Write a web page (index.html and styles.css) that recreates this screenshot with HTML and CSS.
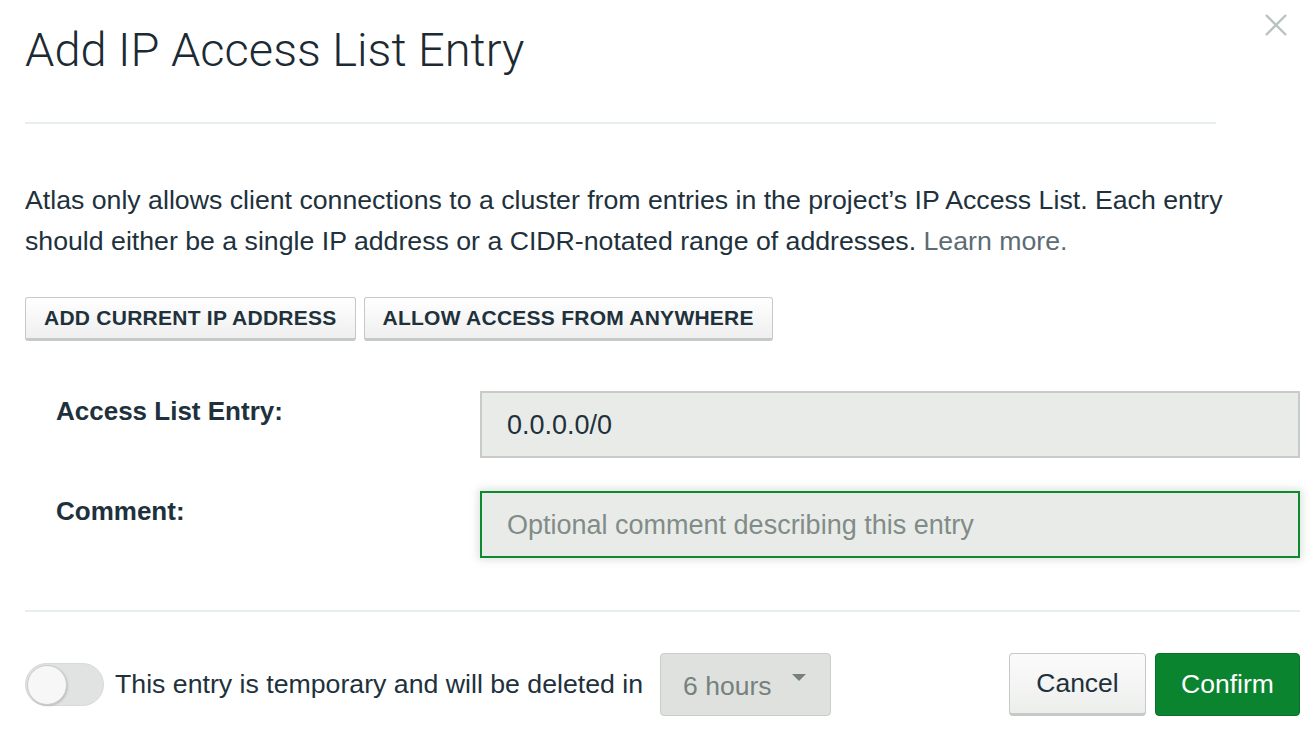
FILE: index.html
```html
<!DOCTYPE html>
<html>
<head>
<meta charset="utf-8">
<link rel="stylesheet" href="styles.css">
</head>
<body>
<div class="modal">
  <header class="modal-header">
    <h1 class="modal-title">Add IP Access List Entry</h1>
    <button class="close" aria-label="Close">
      <svg width="24" height="24" viewBox="0 0 24 24"><path d="M2 2 L22 22 M22 2 L2 22" stroke="#b9c3c1" stroke-width="2.4" fill="none"/></svg>
    </button>
  </header>
  <div class="divider top-divider"></div>
  <p class="intro">Atlas only allows client connections to a cluster from entries in the project’s IP Access List. Each entry<br>should either be a single IP address or a CIDR-notated range of addresses. <a class="link">Learn more.</a></p>
  <div class="quick-actions">
    <button class="btn-secondary">ADD CURRENT IP ADDRESS</button>
    <button class="btn-secondary">ALLOW ACCESS FROM ANYWHERE</button>
  </div>
  <div class="form">
    <label class="form-label">Access List Entry:</label>
    <div class="input">0.0.0.0/0</div>
    <label class="form-label">Comment:</label>
    <div class="input focused placeholder">Optional comment describing this entry</div>
  </div>
  <div class="divider bottom-divider"></div>
  <footer class="footer">
    <div class="temp">
      <span class="toggle"><span class="knob"></span></span>
      <span class="temp-text">This entry is temporary and will be deleted in</span>
      <span class="select">6 hours<span class="caret"></span></span>
    </div>
    <div class="actions">
      <button class="btn-cancel">Cancel</button>
      <button class="btn-confirm">Confirm</button>
    </div>
  </footer>
</div>
</body>
</html>
```
FILE: styles.css
```css
* { box-sizing: border-box; }
html, body { margin: 0; padding: 0; background: #fff; }
body {
  font-family: "Liberation Sans", Arial, sans-serif;
  color: #21313c;
  width: 1315px;
  height: 748px;
  overflow: hidden;
}
.modal { padding: 0 15px 0 25px; }
.modal-header {
  display: flex;
  justify-content: space-between;
  align-items: flex-start;
  height: 122px;
}
.modal-title {
  margin: 0;
  padding-top: 20px;
  font-family: Roboto, "Liberation Sans", sans-serif;
  font-weight: 300;
  font-size: 47px;
  line-height: 60px;
  color: #1c2a33;
}
.close {
  border: 0;
  background: none;
  padding: 0;
  margin-top: 13px;
  margin-right: 12px;
  width: 24px;
  height: 24px;
}
.divider { height: 2px; background: #e7eeec; }
.top-divider { width: 1191px; }
.bottom-divider { width: 1275px; }
.intro {
  margin: 56px 0 0;
  font-size: 26.7px;
  line-height: 41px;
  color: #21313c;
  white-space: nowrap;
}
.link { color: #5d6c74; }
.quick-actions {
  display: flex;
  gap: 8px;
  margin-top: 35px;
}
.btn-secondary {
  height: 44px;
  padding: 0 18px;
  font-family: "Liberation Sans", Arial, sans-serif;
  font-weight: 700;
  font-size: 21px;
  letter-spacing: 0.25px;
  color: #21313c;
  background: linear-gradient(#ffffff, #eeefee);
  border: 1px solid #c5cac8;
  border-bottom: 3px solid #c5cac8;
  border-radius: 3px;
}
.form {
  display: grid;
  grid-template-columns: 455px 820px;
  row-gap: 33px;
  margin-top: 50px;
  margin-bottom: 52px;
}
.form-label {
  padding-left: 31px;
  padding-top: 5px;
  font-weight: 700;
  font-size: 26px;
  line-height: 30px;
  color: #21313c;
}
.input {
  height: 67px;
  display: flex;
  align-items: center;
  padding: 2px 25px 0;
  background: #e9ebe8;
  border: 2px solid #c7cbc9;
  font-size: 27px;
  color: #21313c;
}
.input.focused {
  border-color: #0b8a2f;
  box-shadow: 0 0 8px 2px rgba(180, 190, 180, 0.45);
}
.input.placeholder { color: #818b88; }
.footer {
  display: flex;
  justify-content: space-between;
  align-items: center;
  width: 1275px;
  margin-top: 41px;
}
.temp { display: flex; align-items: center; }
.toggle {
  position: relative;
  width: 79px;
  height: 43px;
  border-radius: 22px;
  background: #e0e3e1;
  border: 1px solid #d6dad8;
}
.knob {
  position: absolute;
  left: 1px;
  top: 1px;
  width: 40px;
  height: 40px;
  border-radius: 50%;
  background: #f6f7f6;
  border: 1px solid #c9cdcb;
  box-shadow: 1px 1px 2px rgba(0,0,0,0.15);
}
.temp-text {
  margin-left: 11px;
  font-size: 26.7px;
  color: #21313c;
}
.select {
  position: relative;
  margin-left: 17px;
  width: 171px;
  height: 63px;
  display: flex;
  align-items: center;
  padding: 4px 0 0 22px;
  background: #dee1de;
  border: 1px solid #c9ceca;
  border-radius: 4px;
  font-size: 26.5px;
  color: #76817e;
}
.caret {
  position: absolute;
  right: 24px;
  top: 20px;
  width: 0;
  height: 0;
  border-left: 7px solid transparent;
  border-right: 7px solid transparent;
  border-top: 7px solid #77807e;
}
.actions { display: flex; gap: 9px; }
.btn-cancel, .btn-confirm {
  height: 63px;
  font-family: "Liberation Sans", Arial, sans-serif;
  font-size: 26.5px;
  border-radius: 4px;
}
.btn-cancel {
  width: 137px;
  color: #21313c;
  background: linear-gradient(#fbfbfb, #eceeec);
  border: 1px solid #c5cac8;
  border-bottom: 3px solid #c5cac8;
}
.btn-confirm {
  width: 145px;
  color: #fff;
  background: #0b8430;
  border: 1px solid #0a6f27;
}
```
